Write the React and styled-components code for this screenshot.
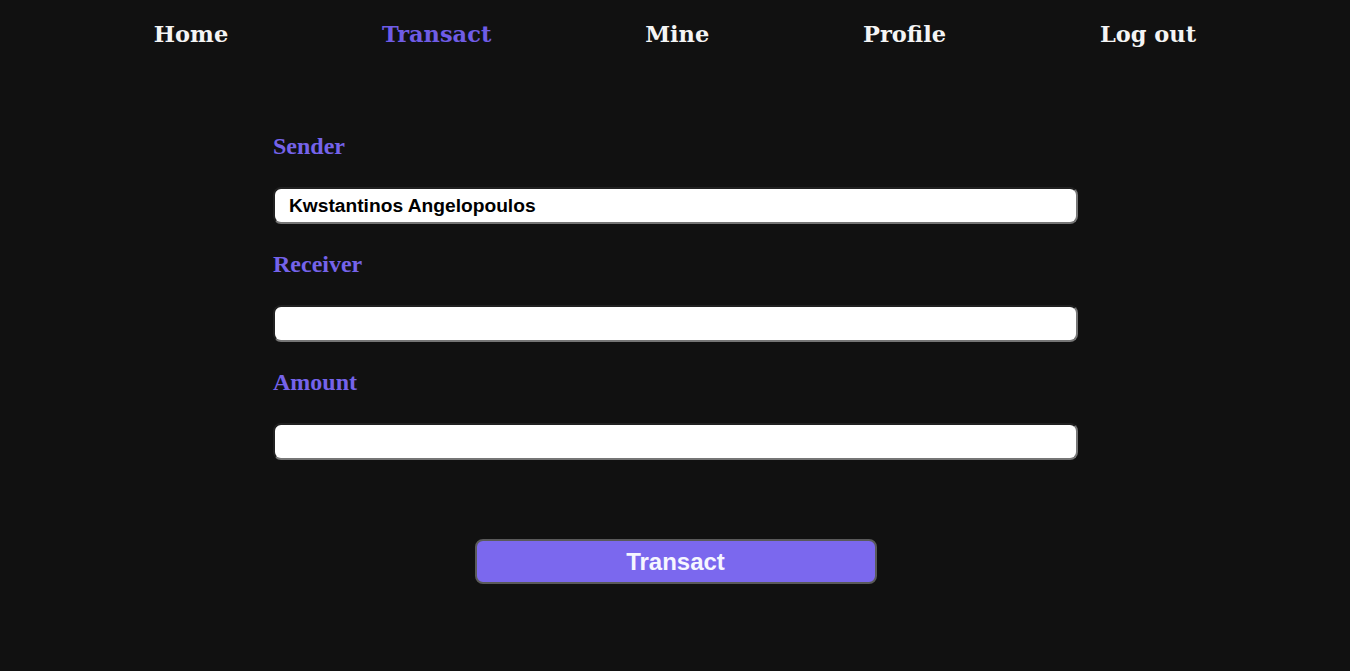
import React from 'react'
import styled, { createGlobalStyle } from 'styled-components';

const GlobalStyle = createGlobalStyle`
  html, body {
    margin: 0;
    padding: 0;
    background: #111111;
  }
  body {
    font-family: "Liberation Serif", serif;
  }
`;

const Page = styled.div`
  min-height: 671px;
  background: #111111;
  box-sizing: border-box;
`;

const Nav = styled.nav`
  display: flex;
  justify-content: space-evenly;
  align-items: center;
  height: 68px;
`;

const NavLink = styled.a`
  font-family: "DejaVu Serif", Georgia, serif;
  font-weight: 700;
  font-size: 22.5px;
  text-decoration: none;
  color: ${({ active }) => (active ? '#6f5ce6' : '#f4f4f4')};
  cursor: pointer;
`;

const Form = styled.form`
  width: 805px;
  margin: 64px auto 0;
  padding-left: 1px;
  display: flex;
  flex-direction: column;
`;

const Field = styled.div`
  display: flex;
  flex-direction: column;
  margin-bottom: 26px;
`;

const Label = styled.label`
  font-family: "Liberation Serif", serif;
  font-weight: 700;
  font-size: 24px;
  color: #7563ea;
  height: 28px;
  line-height: 28px;
  margin-bottom: 27px;
`;

const Input = styled.input`
  box-sizing: border-box;
  width: 100%;
  height: 37px;
  border: 2px inset #767676;
  border-radius: 8px;
  background: #ffffff;
  padding: 0 14px;
  font-family: "Liberation Sans", Arial, sans-serif;
  font-weight: 700;
  font-size: 19.2px;
  color: #000000;
  outline: none;
`;

const ButtonRow = styled.div`
  display: flex;
  justify-content: center;
  margin-top: 53px;
`;

const SubmitButton = styled.button`
  box-sizing: border-box;
  width: 402px;
  height: 45px;
  background: #7b68ee;
  border: 2px solid #5a5a5a;
  border-radius: 8px;
  color: #f6f6ff;
  font-family: "Liberation Sans", Arial, sans-serif;
  font-weight: 700;
  font-size: 24px;
  cursor: pointer;
`;

const links = ['Home', 'Transact', 'Mine', 'Profile', 'Log out'];

const App = () => {
  return (
    <Page>
      <GlobalStyle />
      <Nav>
        {links.map((l) => (
          <NavLink key={l} active={l === 'Transact' ? 1 : 0}>{l}</NavLink>
        ))}
      </Nav>
      <Form onSubmit={(e) => e.preventDefault()}>
        <Field>
          <Label>Sender</Label>
          <Input defaultValue="Kwstantinos Angelopoulos" readOnly />
        </Field>
        <Field>
          <Label>Receiver</Label>
          <Input />
        </Field>
        <Field>
          <Label>Amount</Label>
          <Input />
        </Field>
        <ButtonRow>
          <SubmitButton type="submit">Transact</SubmitButton>
        </ButtonRow>
      </Form>
    </Page>
  );
};

export default App;
